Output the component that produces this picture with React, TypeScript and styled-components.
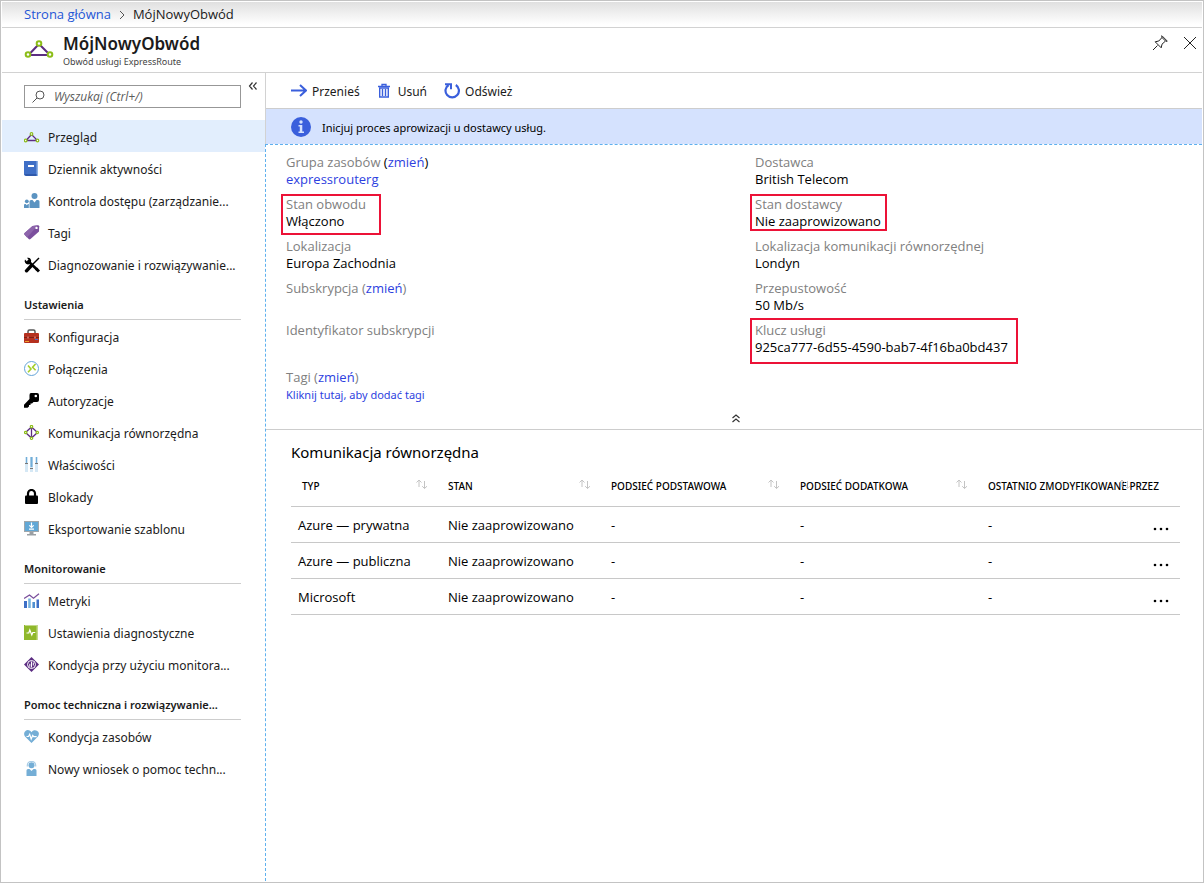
import React from 'react';
import styled, { createGlobalStyle } from 'styled-components';

const compactFont = '"Noto Sans", "Open Sans", sans-serif';

const GlobalStyle = createGlobalStyle`
  *, *::before, *::after { box-sizing: border-box; }
  body {
    margin: 0;
    background: #fff;
    color: #1b1b1b;
    font-family: "Open Sans", "Noto Sans", sans-serif;
    font-size: 13px;
    line-height: 17px;
  }
  button {
    margin: 0;
    padding: 0;
    border: 0;
    background: none;
    color: inherit;
    font: inherit;
    cursor: pointer;
  }
  a { text-decoration: none; }
  svg { display: block; flex: none; }
`;

const Frame = styled.div`
  display: flex;
  flex-direction: column;
  min-height: 100vh;
  padding: 1px;
  border: 1px solid #c3c3c3;
`;

const Breadcrumb = styled.nav`
  display: flex;
  align-items: center;
  gap: 8px;
  height: 26px;
  padding-left: 22px;
  border-bottom: 1px solid #d2d2d2;
  background: linear-gradient(#e0e0e0, #fff 90%);

  a { color: #2456d6; }
`;

const TitleBar = styled.header`
  display: flex;
  align-items: flex-start;
  height: 45px;
  padding: 6px 4px 0 22px;
  border-bottom: 1px solid #d2d2d2;
  font-family: ${compactFont};
`;

const TitleText = styled.div`
  flex: 1;
  padding-left: 9px;
`;

const Title = styled.h1`
  margin: 0;
  font-size: 17px;
  font-weight: 600;
  line-height: 20px;
`;

const Subtitle = styled.div`
  font-size: 9px;
  line-height: 15px;
  color: #444;
`;

const WindowActions = styled.div`
  display: flex;
  gap: 14px;
  padding-top: 1px;
`;

const Body = styled.div`
  display: flex;
  flex: 1;
`;

const Sidebar = styled.aside`
  flex: none;
  width: 263px;
`;

const SearchRow = styled.div`
  display: flex;
  align-items: flex-start;
  gap: 7px;
  height: 47px;
  padding: 9px 0 0 22px;
`;

const SearchBox = styled.label`
  display: flex;
  align-items: center;
  gap: 9px;
  width: 217px;
  height: 23px;
  margin-top: 3px;
  padding-left: 7px;
  border: 1px solid #979797;

  input {
    flex: 1;
    min-width: 0;
    padding: 0;
    border: 0;
    outline: 0;
    background: none;
    font: inherit;
    font-size: 12px;
    font-style: italic;
  }
  input::placeholder { color: #5c5c5c; opacity: 1; }
`;

const NavList = styled.ul`
  margin: 0;
  padding: 0;
  list-style: none;
`;

const NavLink = styled.a<{ $active?: boolean }>`
  display: flex;
  align-items: center;
  gap: 8px;
  height: 32px;
  padding: 2px 0 0 22px;
  background: ${(p) => (p.$active ? '#e2eefd' : 'transparent')};
  color: #1b1b1b;
  font-family: ${compactFont};
  font-size: 12px;
  white-space: nowrap;

  svg { margin-bottom: 1px; }
`;

const NavHeading = styled.h2`
  height: 40px;
  margin: 0 24px 0 22px;
  padding-top: 16px;
  border-bottom: 1px solid #cdcdcd;
  font-family: ${compactFont};
  font-size: 11px;
  font-weight: 600;
  white-space: nowrap;
`;

const Main = styled.main`
  display: flex;
  flex: 1;
  flex-direction: column;
  min-width: 0;
`;

const TopPane = styled.div`
  border-left: 1px solid #d2d2d2;
  font-family: ${compactFont};
`;

const Toolbar = styled.div`
  display: flex;
  align-items: center;
  gap: 17px;
  height: 36px;
  padding: 1px 0 0 25px;
  border-bottom: 1px solid #cdcdcd;
  font-size: 12px;
`;

const ToolButton = styled.button`
  display: flex;
  align-items: center;
  gap: 5px;

  svg { margin-bottom: 1px; }
`;

const InfoBar = styled.div`
  display: flex;
  align-items: center;
  gap: 11px;
  height: 35px;
  padding: 1px 0 0 25px;
  background: #d5e2fe;
  font-size: 11px;
  color: #000;

  svg { margin-bottom: 1px; }
`;

const Detail = styled.div`
  flex: 1;
  border: dashed #5eb0ee;
  border-width: 1px 0 0 1px;
`;

const Essentials = styled.section`
  padding-top: 9px;
  border-bottom: 1px solid #cdcdcd;
`;

const FieldGrid = styled.dl`
  display: grid;
  grid-template-columns: 1fr 1fr;
  grid-template-rows: repeat(4, 34px) 39px 34px;
  row-gap: 8px;
  margin: 0;
`;

const Field = styled.div<{ $column: number }>`
  grid-column: ${(p) => p.$column};
  padding-left: ${(p) => (p.$column === 1 ? 20 : 21)}px;

  dt { color: #808080; }
  dd { margin: 0; color: #000; }
  a { color: #2e3fe0; }
`;

const Mark = styled.div<{ $width: number; $height: number; $rise?: number }>`
  position: relative;

  &::after {
    content: '';
    position: absolute;
    top: -${(p) => p.$rise ?? 2}px;
    left: -5px;
    width: ${(p) => p.$width}px;
    height: ${(p) => p.$height}px;
    border: 2px solid #ec1237;
    pointer-events: none;
  }
`;

const DarkText = styled.span`
  color: #000;
`;

const SmallLink = styled.a`
  font-family: ${compactFont};
  font-size: 11px;
`;

const CollapseRow = styled.div`
  display: flex;
  justify-content: center;
  padding: 10px 0 6px 4px;
`;

const Peerings = styled.section`
  padding: 12px 22px 0 25px;
`;

const SectionTitle = styled.h2`
  margin: 0;
  color: #000;
  font-family: ${compactFont};
  font-size: 15px;
  font-weight: 400;
  line-height: 20px;
`;

const Table = styled.table`
  width: 100%;
  border-collapse: collapse;
  table-layout: fixed;
  color: #000;

  th, td {
    padding: 0 0 0 7px;
    border-bottom: 1px solid #c8c8c8;
    text-align: left;
    white-space: nowrap;
  }
  th {
    height: 44px;
    padding-top: 2px;
    font-family: ${compactFont};
    font-size: 10px;
    font-weight: 500;
  }
  th:first-child { padding-left: 11px; }
  td { height: 36px; padding-top: 3px; }
`;

const SortButton = styled.button`
  display: flex;
  align-items: center;
  width: 100%;
  padding: 3px 13px 0 0;

  span {
    flex: 1;
    min-width: 0;
    text-align: left;
    white-space: nowrap;
  }
  svg { margin-bottom: 4px; }
`;

const MoreButton = styled.button`
  padding: 10px 0 0 2px;
`;

const Svg = ({ w = 16, h = 16, box, children }: { w?: number; h?: number; box?: string; children: React.ReactNode }) => (
  <svg width={w} height={h} viewBox={box ?? `0 0 ${w} ${h}`} fill="none" aria-hidden="true">
    {children}
  </svg>
);

const Circuit = () => (
  <Svg>
    <path d="M2 11.500 7.500 5.500l6 6z" stroke="#5c2d82" strokeWidth="1.300" />
    <g fill="#fff" stroke="#8cbd18" strokeWidth="1.200">
      <circle cx="7.500" cy="5" r="1.300" />
      <circle cx="1.700" cy="11.500" r="1.300" />
      <circle cx="13.500" cy="11.500" r="1.300" />
    </g>
  </Svg>
);

const Log = () => (
  <Svg>
    <path d="M0 0h14v15H2a2 2 0 0 1-2-2z" fill="#3f6fc6" />
    <path d="M12.500 0H14v15h-1.500z" fill="#8fb2e4" />
    <path d="M0 13h12.500v2H2z" fill="#2f59ab" />
    <path d="M4 4h6v2H4z" fill="#fff" />
  </Svg>
);

const People = () => (
  <Svg>
    <g fill="#5b93c1">
      <circle cx="10.500" cy="3" r="3" />
      <path d="M5.500 15V8.500Q5.500 7 7 7h1.500l2 2.500 2-2.500H14q1.500 0 1.500 1.500V15z" />
      <circle cx="2.800" cy="8.300" r="1.900" />
      <path d="M0 15v-3q0-1 1-1h.7l1.100 1.300L4 11h.8v4z" />
    </g>
  </Svg>
);

const Tag = () => (
  <Svg>
    <path d="M8.500 1 14 .2q1 0 1.200 1L15 6.500 6.500 14q-1 .8-1.800 0L.6 9.700q-.8-1 0-1.800z" fill="#7b4f9d" />
    <path d="M8.500 1 14 .2 3 12.500.6 9.700q-.8-1 0-1.800z" fill="#8d64ab" />
    <circle cx="12.500" cy="2.900" r="1.200" fill="#fff" />
  </Svg>
);

const Tools = () => (
  <Svg>
    <path d="M3.500 3.500 13.500 13" stroke="#000" strokeWidth="2.600" />
    <path d="M1 2.500 3 4.500l1.800-1.600L3 .8Q5.500.3 6.600 2t.2 3.500L5 7.300Q2.500 7.800 1.300 6T1 2.500z" fill="#000" />
    <path d="M15 1 7.500 8.500" stroke="#000" strokeWidth="1.400" />
    <path d="m7 9-4.500 4.800" stroke="#000" strokeWidth="3.400" strokeLinecap="round" />
    <path d="m12 11.500 3 3" stroke="#000" strokeWidth="3" />
  </Svg>
);

const Toolbox = () => (
  <Svg>
    <path d="M4 4V2.500q0-1.500 1.500-1.500h4q1.500 0 1.500 1.500V4" stroke="#555" strokeWidth="1.500" />
    <rect x="0" y="4" width="15" height="10" rx="1" fill="#b5301f" />
    <path d="M0 8h15v1H0z" fill="#7c1d13" />
    <path d="M3 7.500h2v2H3zM10 7.500h2v2h-2z" fill="#c9685e" />
    <path d="M1 12h4v1H1z" fill="#f1a22e" />
    <path d="M11 10h3v1h-3z" fill="#4869d6" />
  </Svg>
);

const Connections = () => (
  <Svg>
    <circle cx="7.500" cy="7.500" r="7" stroke="#65a5d8" />
    <path d="M4 4.500 7 8l-3 3.200M11.500 3 8.600 6.200l3 3" stroke="#a4cf28" strokeWidth="1.600" />
  </Svg>
);

const Key = () => (
  <Svg>
    <path d="M7 0h6q2 0 2 2v5q0 2-2 2H9.500L8 10.500H6.500V12H5v1.500l-1.500 1.200H0v-3L5.500 6V2q0-2 1.500-2z" fill="#000" />
    <circle cx="11.800" cy="3" r="1.300" fill="#fff" />
  </Svg>
);

const Peering = () => (
  <Svg>
    <path d="M7.500 2 13.500 7.500 7.500 13 1.500 7.500zM7.500 2v11" stroke="#5c2d82" strokeWidth="1.300" />
    <g fill="#fff" stroke="#8cbd18" strokeWidth="1.200">
      <circle cx="7.500" cy="1.700" r="1.200" />
      <circle cx="7.500" cy="13.300" r="1.200" />
      <circle cx="1.700" cy="7.500" r="1.200" />
      <circle cx="13.300" cy="7.500" r="1.200" />
    </g>
  </Svg>
);

const Sliders = () => (
  <Svg>
    <path d="M1 0h3v15H1zM6 0h3v15H6zM11 0h3v15h-3z" fill="#d5e8f5" />
    <path d="M2 0h1v6H2zM6.500 0h2v10h-2zM12 0h1v6h-1z" fill="#72add8" />
    <path d="M1 6h3v1H1zM6 11h3v1H6zM11 6h3v1h-3z" fill="#777" />
  </Svg>
);

const Lock = () => (
  <Svg>
    <path d="M4 7V4.500a3.500 3.500 0 0 1 7 0V7" stroke="#000" strokeWidth="2.200" />
    <rect x="1" y="6.500" width="13" height="8.500" rx="1" fill="#000" />
  </Svg>
);

const Export = () => (
  <Svg>
    <path d="M0 0h15v11H0z" fill="#a0a6aa" />
    <path d="M1 1h13v9H1z" fill="#62a8d6" />
    <path d="M5.500 11h4v2h2.500v1.500H3V13h2.500z" fill="#9a9fa3" />
    <path d="M7.500 1.500V6M5.300 4.300l2.200 2.200 2.200-2.200M5 8.200h5" stroke="#fff" strokeWidth="1.200" />
  </Svg>
);

const Metrics = () => (
  <Svg>
    <path d="M0 8h3v7H0zM12.500 6.500h2.500V15h-2.500z" fill="#3d6fc6" />
    <path d="M4.200 5.500h2.600V15H4.200z" fill="#76b3df" />
    <path d="M8.400 9H11v6H8.400z" fill="#4f8fd0" />
    <path d="M0 5.500 5.500 2l4 3.200L15 .8" stroke="#7a4f9c" strokeWidth="1.300" />
  </Svg>
);

const Diagnostics = () => (
  <Svg>
    <path d="M0 0h14v15H0z" fill="#8fb82b" />
    <path d="M12.500 1H14v14h-1.500zM1 0h13v1H1z" fill="#c3d98a" />
    <path d="M2.500 8h2.300l1-3 2 5 1-2.500h2.500" stroke="#fff" strokeWidth="1.200" />
  </Svg>
);

const Monitor = () => (
  <Svg>
    <path d="M7.500 0 15 7.500 7.500 15 0 7.500z" fill="#5c2d82" />
    <circle cx="7.500" cy="7.500" r="4" stroke="#fff" />
    <path d="M5.800 6.800v3M7.500 4.500v6M9.300 5.500v3" stroke="#fff" />
  </Svg>
);

const Heart = () => (
  <Svg>
    <path d="M7.500 14 1 7.500Q-.7 5 .8 2.700T5 1.300q1.700.4 2.500 2 .8-1.600 2.500-2 2.700-.5 4.200 1.400T14 7.500z" fill="#74aed6" />
    <path d="M2.500 7.500h2l1.200-2.300L7.200 10l1.500-3.500 1 1.200h3" stroke="#fff" strokeWidth="1.200" />
  </Svg>
);

const Support = () => (
  <Svg>
    <circle cx="7.500" cy="4.200" r="3" fill="#74aed6" />
    <path d="M3.300 5.500V4.300a4.200 4 0 0 1 8.400 0v1.200" stroke="#a9cde6" strokeWidth="1.200" />
    <path d="M2.500 15V9.500Q2.500 8 4 8h1.500l2 2 2-2H11q1.500 0 1.500 1.500V15z" fill="#74aed6" />
  </Svg>
);

const SortArrows = () => (
  <Svg w={12} h={10}>
    <path d="M3 8V1M.5 3.500 3 1l2.500 2.500M8.500 2v7.500M6.200 7.200l2.300 2.300L11 7.200" stroke="#c4c4c4" />
  </Svg>
);

type NavEntry = { icon: React.ReactNode; label: string; active?: boolean };

const navGroups: { heading?: string; items: NavEntry[] }[] = [
  {
    items: [
      { icon: <Circuit />, label: 'Przegląd', active: true },
      { icon: <Log />, label: 'Dziennik aktywności' },
      { icon: <People />, label: 'Kontrola dostępu (zarządzanie...' },
      { icon: <Tag />, label: 'Tagi' },
      { icon: <Tools />, label: 'Diagnozowanie i rozwiązywanie...' },
    ],
  },
  {
    heading: 'Ustawienia',
    items: [
      { icon: <Toolbox />, label: 'Konfiguracja' },
      { icon: <Connections />, label: 'Połączenia' },
      { icon: <Key />, label: 'Autoryzacje' },
      { icon: <Peering />, label: 'Komunikacja równorzędna' },
      { icon: <Sliders />, label: 'Właściwości' },
      { icon: <Lock />, label: 'Blokady' },
      { icon: <Export />, label: 'Eksportowanie szablonu' },
    ],
  },
  {
    heading: 'Monitorowanie',
    items: [
      { icon: <Metrics />, label: 'Metryki' },
      { icon: <Diagnostics />, label: 'Ustawienia diagnostyczne' },
      { icon: <Monitor />, label: 'Kondycja przy użyciu monitora...' },
    ],
  },
  {
    heading: 'Pomoc techniczna i rozwiązywanie...',
    items: [
      { icon: <Heart />, label: 'Kondycja zasobów' },
      { icon: <Support />, label: 'Nowy wniosek o pomoc techn...' },
    ],
  },
];

const columns = [
  { label: 'TYP', width: 150 },
  { label: 'STAN', width: 163 },
  { label: 'PODSIEĆ PODSTAWOWA', width: 189 },
  { label: 'PODSIEĆ DODATKOWA', width: 188 },
  { label: 'OSTATNIO ZMODYFIKOWANE PRZEZ', width: 163 },
];

const peerings = ['Azure — prywatna', 'Azure — publiczna', 'Microsoft'];

export default function App() {
  return (
    <>
      <GlobalStyle />
      <Frame>
        <Breadcrumb aria-label="Ścieżka">
          <a href="#home">Strona główna</a>
          <Svg w={6} h={10}>
            <path d="m1 1 4 4-4 4" stroke="#555" />
          </Svg>
          <span>MójNowyObwód</span>
        </Breadcrumb>
        <TitleBar>
          <Svg w={30} h={36}>
            <g transform="translate(0 5)">
              <path d="M4.500 16 15 5l11 11z" stroke="#5c2d82" strokeWidth="2" />
              <g fill="#fff" stroke="#8cbd18" strokeWidth="2">
                <circle cx="15" cy="4.500" r="2.300" />
                <circle cx="4" cy="15.500" r="2.300" />
                <circle cx="26" cy="15.500" r="2.300" />
              </g>
            </g>
          </Svg>
          <TitleText>
            <Title>MójNowyObwód</Title>
            <Subtitle>Obwód usługi ExpressRoute</Subtitle>
          </TitleText>
          <WindowActions>
            <button type="button" aria-label="Przypnij">
              <Svg>
                <path d="M1 15l4.500-4.500M9.500 2 14 6.500M10 2.500 6.800 6 3.200 6.800 9.200 12.800 10 9.200 13.500 6M9 1.500 10 .8 15.200 6l-.8 1" stroke="#222" />
              </Svg>
            </button>
            <button type="button" aria-label="Zamknij">
              <Svg>
                <path d="m2 2 12 12M14 2 2 14" stroke="#222" />
              </Svg>
            </button>
          </WindowActions>
        </TitleBar>
        <Body>
          <Sidebar>
            <SearchRow>
              <SearchBox>
                <Svg w={13} h={13}>
                  <circle cx="8" cy="5" r="4" stroke="#555" />
                  <path d="M5 8 .5 12.500" stroke="#555" />
                </Svg>
                <input type="search" placeholder="Wyszukaj (Ctrl+/)" aria-label="Wyszukaj" />
              </SearchBox>
              <button type="button" aria-label="Zwiń menu">
                <Svg w={10} h={8} box="0 3 10 8">
                  <path d="M4.500 3.500 1.500 7l3 3.500M8.500 3.500 5.500 7l3 3.500" stroke="#333" strokeWidth="1.200" />
                </Svg>
              </button>
            </SearchRow>
            {navGroups.map((group) => (
              <section key={group.heading ?? 'main'}>
                {group.heading && <NavHeading>{group.heading}</NavHeading>}
                <NavList>
                  {group.items.map((item) => (
                    <li key={item.label}>
                      <NavLink href="#blade" $active={item.active}>
                        {item.icon}
                        <span>{item.label}</span>
                      </NavLink>
                    </li>
                  ))}
                </NavList>
              </section>
            ))}
          </Sidebar>
          <Main>
            <TopPane>
              <Toolbar>
                <ToolButton type="button">
                  <Svg>
                    <path d="M0 7.500h14.500M9 2l6 5.500L9 13" stroke="#3a5fdc" strokeWidth="2" />
                  </Svg>
                  Przenieś
                </ToolButton>
                <ToolButton type="button">
                  <Svg>
                    <path d="M1 3.500h12M5 3V1.500h4V3" stroke="#3a5fdc" strokeWidth="1.300" />
                    <path d="M2.700 5h8.600v9H2.700zM5.500 6v7M8.500 6v7" stroke="#3a5fdc" strokeWidth="1.400" />
                  </Svg>
                  Usuń
                </ToolButton>
                <ToolButton type="button">
                  <Svg>
                    <path d="M11.800 2a6.700 6.700 0 1 1-7.200 0" stroke="#3a5fdc" strokeWidth="2.200" />
                    <path d="M1 1.200h6v5" stroke="#3a5fdc" strokeWidth="2" />
                  </Svg>
                  Odśwież
                </ToolButton>
              </Toolbar>
              <InfoBar role="status">
                <Svg w={20} h={20}>
                  <circle cx="10" cy="10" r="10" fill="#3a5fdc" />
                  <circle cx="10" cy="5" r="1.700" fill="#d5e2fe" />
                  <path d="M7.500 8h3.800v6.500H13V16H7.500v-1.500h1.300v-5H7.500z" fill="#d5e2fe" />
                </Svg>
                Inicjuj proces aprowizacji u dostawcy usług.
              </InfoBar>
            </TopPane>
            <Detail>
              <Essentials>
                <FieldGrid>
                  <Field $column={1}>
                    <dt>
                      Grupa zasobów <DarkText>(<a href="#group">zmień</a>)</DarkText>
                    </dt>
                    <dd><a href="#expressrouterg">expressrouterg</a></dd>
                  </Field>
                  <Field $column={2}>
                    <dt>Dostawca</dt>
                    <dd>British Telecom</dd>
                  </Field>
                  <Field $column={1}>
                    <Mark $width={100} $height={41}>
                      <dt>Stan obwodu</dt>
                      <dd>Włączono</dd>
                    </Mark>
                  </Field>
                  <Field $column={2}>
                    <Mark $width={137} $height={37}>
                      <dt>Stan dostawcy</dt>
                      <dd>Nie zaaprowizowano</dd>
                    </Mark>
                  </Field>
                  <Field $column={1}>
                    <dt>Lokalizacja</dt>
                    <dd>Europa Zachodnia</dd>
                  </Field>
                  <Field $column={2}>
                    <dt>Lokalizacja komunikacji równorzędnej</dt>
                    <dd>Londyn</dd>
                  </Field>
                  <Field $column={1}>
                    <dt>Subskrypcja (<a href="#subscription">zmień</a>)</dt>
                  </Field>
                  <Field $column={2}>
                    <dt>Przepustowość</dt>
                    <dd>50 Mb/s</dd>
                  </Field>
                  <Field $column={1}>
                    <dt>Identyfikator subskrypcji</dt>
                  </Field>
                  <Field $column={2}>
                    <Mark $width={268} $height={46} $rise={4}>
                      <dt>Klucz usługi</dt>
                      <dd>925ca777-6d55-4590-bab7-4f16ba0bd437</dd>
                    </Mark>
                  </Field>
                  <Field $column={1}>
                    <dt>Tagi (<a href="#tags">zmień</a>)</dt>
                    <dd><SmallLink href="#add-tags">Kliknij tutaj, aby dodać tagi</SmallLink></dd>
                  </Field>
                </FieldGrid>
                <CollapseRow>
                  <button type="button" aria-label="Zwiń podstawowe informacje">
                    <Svg w={10} h={10}>
                      <path d="M1.500 5 5 2l3.500 3M1.500 9 5 6l3.500 3" stroke="#333" strokeWidth="1.200" />
                    </Svg>
                  </button>
                </CollapseRow>
              </Essentials>
              <Peerings>
                <SectionTitle>Komunikacja równorzędna</SectionTitle>
                <Table>
                  <colgroup>
                    {columns.map((c) => (
                      <col key={c.label} width={c.width} />
                    ))}
                    <col width={36} />
                  </colgroup>
                  <thead>
                    <tr>
                      {columns.map((c) => (
                        <th key={c.label} scope="col">
                          <SortButton type="button">
                            <span>{c.label}</span>
                            <SortArrows />
                          </SortButton>
                        </th>
                      ))}
                      <th aria-label="Akcje" />
                    </tr>
                  </thead>
                  <tbody>
                    {peerings.map((name) => (
                      <tr key={name}>
                        <td>{name}</td>
                        <td>Nie zaaprowizowano</td>
                        <td>-</td>
                        <td>-</td>
                        <td>-</td>
                        <td>
                          <MoreButton type="button" aria-label={`Więcej: ${name}`}>
                            <Svg w={16} h={4}>
                              <g fill="#000">
                                <circle cx="2" cy="2" r="1.300" />
                                <circle cx="8" cy="2" r="1.300" />
                                <circle cx="14" cy="2" r="1.300" />
                              </g>
                            </Svg>
                          </MoreButton>
                        </td>
                      </tr>
                    ))}
                  </tbody>
                </Table>
              </Peerings>
            </Detail>
          </Main>
        </Body>
      </Frame>
    </>
  );
}
